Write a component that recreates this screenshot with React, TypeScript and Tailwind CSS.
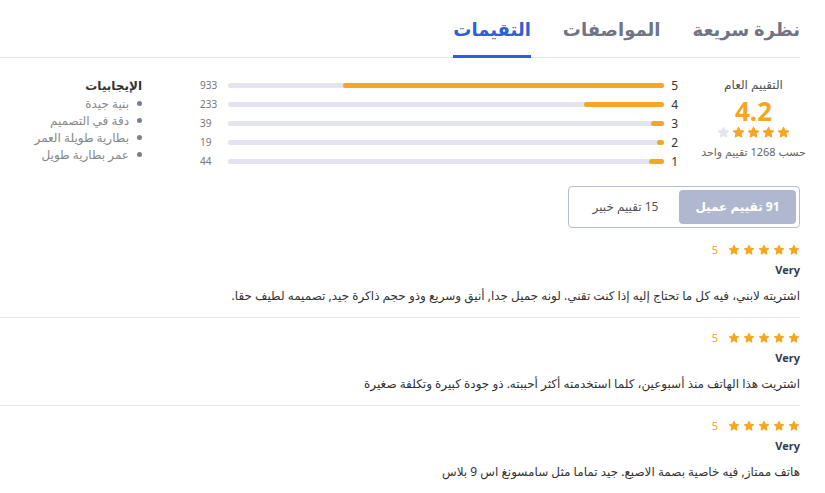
const bars = [
  { star: 5, count: 933 },
  { star: 4, count: 233 },
  { star: 3, count: 39 },
  { star: 2, count: 19 },
  { star: 1, count: 44 },
];
const total = 1268;

const positives = ['بنية جيدة', 'دقة في التصميم', 'بطارية طويلة العمر', 'عمر بطارية طويل'];

const reviews = [
  'اشتريته لابني، فيه كل ما تحتاج إليه إذا كنت تقني. لونه جميل جدا, أنيق وسريع وذو حجم ذاكرة جيد, تصميمه لطيف حقا.',
  'اشتريت هذا الهاتف منذ أسبوعين، كلما استخدمته أكثر أحببته. ذو جودة كبيرة وتكلفة صغيرة',
  'هاتف ممتاز, فيه خاصية بصمة الاصبع. جيد تماما مثل سامسونغ اس 9 بلاس',
];

const Star = ({ className }: { className: string }) => (
  <svg
    viewBox="0 0 24 24"
    className={className}
    fill="currentColor"
    stroke="currentColor"
    strokeWidth={2}
    strokeLinejoin="round"
  >
    <path d="M12 2.5l2.9 6 6.6.8-4.9 4.5 1.3 6.6L12 17.2l-5.9 3.2 1.3-6.6-4.9-4.5 6.6-.8z" />
  </svg>
);

export default function App() {
  return (
    <div
      dir="rtl"
      className="w-[825px] h-[493px] overflow-hidden bg-white text-[#333] flex flex-col"
      style={{ fontFamily: '"Noto Sans", "DejaVu Sans", sans-serif' }}
    >
      <div className="pr-[25px]">
        {/* tabs */}
        <nav className="flex gap-8 pt-[16px] border-b border-[#e3e4ee]">
          <span className="text-[18px] font-bold text-[#6f7585] pb-[14px]">نظرة سريعة</span>
          <span className="text-[18px] font-bold text-[#6f7585] pb-[14px]">المواصفات</span>
          <span className="text-[18px] font-bold text-[#2f5fd8] pb-[12px] border-b-[3px] border-[#2f5fd8] -mb-px">
            التقيمات
          </span>
        </nav>

        {/* summary */}
        <section className="flex items-start pt-[19px]">
          <div className="w-[93px] flex flex-col items-center">
            <span className="text-[12px] text-[#555] leading-4">التقييم العام</span>
            <span className="text-[26px] font-bold text-[#f5a623] leading-[36px]">4.2</span>
            <div className="flex gap-[2px] -mt-[3px]">
              {[0, 1, 2, 3].map((i) => (
                <Star key={i} className="w-[13px] h-[13px] text-[#f5a623]" />
              ))}
              <Star className="w-[13px] h-[13px] text-[#e3e4ee]" />
            </div>
            <span className="text-[11px] text-[#666] mt-[5px] whitespace-nowrap">حسب 1268 تقييم واحد</span>
          </div>

          <div className="w-[478px] mr-[29px] flex flex-col gap-[6px] pt-[2px]">
            {bars.map((b) => (
              <div key={b.star} className="flex items-center h-[13px]">
                <span className="w-[14px] text-[12px] text-[#333]">{b.star}</span>
                <div className="w-[436px] h-[5px] rounded-full bg-[#e3e4f0] flex">
                  <div
                    className="h-full rounded-full bg-[#f5a623]"
                    style={{ width: `${Math.max((b.count / total) * 100, 1.5)}%` }}
                  />
                </div>
                <span className="flex-1 text-[10px] text-[#777] text-left">{b.count}</span>
              </div>
            ))}
          </div>

          <div className="mr-[58px] flex flex-col">
            <span className="text-[12px] font-bold text-[#333] leading-[18px]">الإيجابيات</span>
            <ul className="flex flex-col">
              {positives.map((p) => (
                <li key={p} className="flex items-center gap-[8px] text-[12px] text-[#888] leading-[17px]">
                  <span className="w-[5px] h-[5px] rounded-full bg-[#7a7f8e]" />
                  {p}
                </li>
              ))}
            </ul>
          </div>
        </section>

        {/* toggle */}
        <div className="mt-[18px] w-[232px] h-[42px] border border-[#b6bdd3] rounded-[4px] p-[3px] flex">
          <button className="w-[117px] h-full rounded-[4px] bg-[#b0b8d0] text-white text-[12px] font-bold">
            91 تقييم عميل
          </button>
          <button className="flex-1 text-[#555] text-[12px]">15 تقييم خبير</button>
        </div>
      </div>

      {/* reviews */}
      <div className="mt-[8px] flex flex-col pr-[25px]">
        {reviews.map((r, i) => (
          <div
            key={i}
            className={`flex flex-col ${i === 0 ? 'pt-[4px]' : 'pt-[10px]'} ${i < reviews.length - 1 ? 'border-b border-[#e3e4ee] pb-[8px]' : 'pb-[8px]'}`}
          >
            <div className="flex items-center gap-[3px] h-[20px]">
              {[0, 1, 2, 3, 4].map((s) => (
                <Star key={s} className="w-[12px] h-[12px] text-[#f5a623]" />
              ))}
              <span className="text-[11px] text-[#f5a623] mr-[7px]">5</span>
            </div>
            <span className="text-[11px] font-bold text-[#333a4d] leading-[20px]" dir="ltr" style={{ textAlign: 'right' }}>
              Very
            </span>
            <p className="text-[12px] text-[#333] leading-[26px] mt-[3px]">{r}</p>
          </div>
        ))}
      </div>
      <div className="mt-auto h-[5px] bg-[#cfcfcf] border-t border-[#ececec]" />
    </div>
  );
}
